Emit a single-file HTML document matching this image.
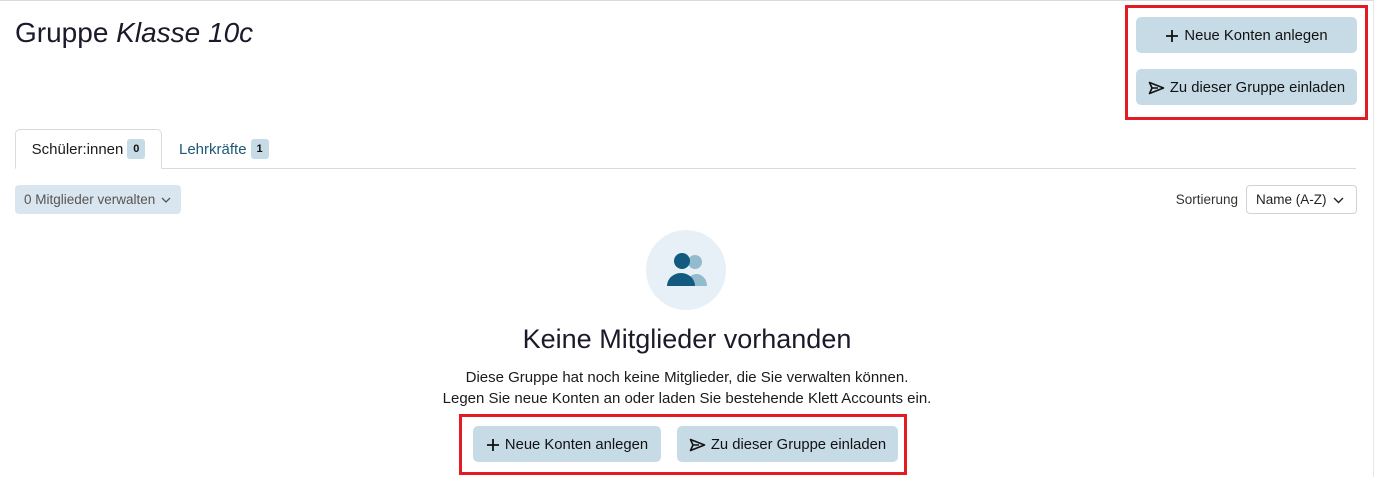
<!DOCTYPE html>
<html><head><meta charset="utf-8"><style>
*{box-sizing:border-box;margin:0;padding:0}
body{width:1374px;height:477px;background:#fff;font-family:"Liberation Sans",sans-serif;color:#1a1a1a;position:relative;overflow:hidden}
.abs{position:absolute}
.btn{position:absolute;background:#c7dbe7;border-radius:5px;font-size:14.8px;color:#111;display:flex;align-items:center;justify-content:center;gap:5px;padding-top:1px}
.red{position:absolute;border:3px solid #e31b23}
.badge{display:inline-flex;align-items:center;justify-content:center;background:#c7dbe7;border-radius:3px;font-size:11px;font-weight:bold;width:18px;height:20px;margin-left:4px;color:#111}
</style></head><body>
<div class="abs" style="left:0;top:0;width:1374px;height:1px;background:#d6dbe0"></div>
<div class="abs" style="left:1373px;top:0;width:1px;height:477px;background:#e3e7eb"></div>
<div class="abs" style="left:15px;top:17px;font-size:28px;color:#1a1a2a">Gruppe <i>Klasse 10c</i></div>

<div class="red" style="left:1125px;top:5px;width:243px;height:115px"></div>
<div class="btn" style="left:1136px;top:17px;width:221px;height:36px"><svg width="14" height="14" viewBox="0 0 14 14"><path d="M7 1v12M1 7h12" stroke="#111" stroke-width="1.8"/></svg>Neue Konten anlegen</div>
<div class="btn" style="left:1136px;top:69px;width:221px;height:36px"><svg width="17" height="14" viewBox="0 0 17 14"><path d="M1.5 1.5L15.5 7L1.5 12.5L4 7Z M4 7H10" fill="none" stroke="#111" stroke-width="1.6" stroke-linejoin="round"/></svg>Zu dieser Gruppe einladen</div>

<div class="abs" style="left:15px;top:168px;width:1341px;height:1px;background:#d6dbe0"></div>
<div class="abs" style="left:15px;top:129px;width:147px;height:40px;border:1px solid #d6dbe0;border-bottom:1px solid #fff;border-radius:5px 5px 0 0;background:#fff;font-size:15px;display:flex;align-items:center;justify-content:center">Schüler:innen<span class="badge">0</span></div>
<div class="abs" style="left:179px;top:129px;height:40px;font-size:15px;color:#1d5878;display:flex;align-items:center">Lehrkräfte<span class="badge">1</span></div>

<div class="abs" style="left:15px;top:185px;width:166px;height:29px;background:#dae6ef;border-radius:4px;font-size:13.5px;color:#555;display:flex;align-items:center;padding-left:9px">0 Mitglieder verwalten <svg style="margin-left:6px" width="10" height="6" viewBox="0 0 10 6"><path d="M1 1l4 4 4-4" fill="none" stroke="#555" stroke-width="1.3"/></svg></div>

<div class="abs" style="left:1150px;top:185px;width:88px;height:29px;font-size:13.5px;color:#333;display:flex;align-items:center;justify-content:flex-end">Sortierung</div>
<div class="abs" style="left:1246px;top:185px;width:111px;height:29px;border:1px solid #ccd3da;border-radius:4px;font-size:13.5px;color:#222;display:flex;align-items:center;padding-left:9px">Name (A-Z)<svg style="position:absolute;right:12px;top:11px" width="11" height="7" viewBox="0 0 11 7"><path d="M1 1l4.5 4.5L10 1" fill="none" stroke="#222" stroke-width="1.4"/></svg></div>

<div class="abs" style="left:646px;top:230px;width:80px;height:80px;border-radius:50%;background:#e7f0f6"></div>
<svg class="abs" style="left:664px;top:250px" width="44" height="40" viewBox="0 0 44 40">
<circle cx="31" cy="12" r="7" fill="#94bacd"/>
<path d="M22 36a10.5 12 0 0 1 21 0z" fill="#94bacd"/>
<circle cx="18" cy="11" r="8" fill="#125a80"/>
<path d="M3 36a14 13 0 0 1 28 0z" fill="#125a80"/>
</svg>

<div class="abs" style="left:0;width:1374px;top:324px;text-align:center;font-size:27px;color:#1a1a2a">Keine Mitglieder vorhanden</div>
<div class="abs" style="left:0;width:1374px;top:367px;text-align:center;font-size:15px;line-height:21px;color:#1a1a1a">Diese Gruppe hat noch keine Mitglieder, die Sie verwalten können.<br>Legen Sie neue Konten an oder laden Sie bestehende Klett Accounts ein.</div>

<div class="red" style="left:459px;top:414px;width:448px;height:61px"></div>
<div class="btn" style="left:473px;top:426px;width:188px;height:36px"><svg width="14" height="14" viewBox="0 0 14 14"><path d="M7 1v12M1 7h12" stroke="#111" stroke-width="1.8"/></svg>Neue Konten anlegen</div>
<div class="btn" style="left:677px;top:426px;width:221px;height:36px"><svg width="17" height="14" viewBox="0 0 17 14"><path d="M1.5 1.5L15.5 7L1.5 12.5L4 7Z M4 7H10" fill="none" stroke="#111" stroke-width="1.6" stroke-linejoin="round"/></svg>Zu dieser Gruppe einladen</div>
</body></html>
